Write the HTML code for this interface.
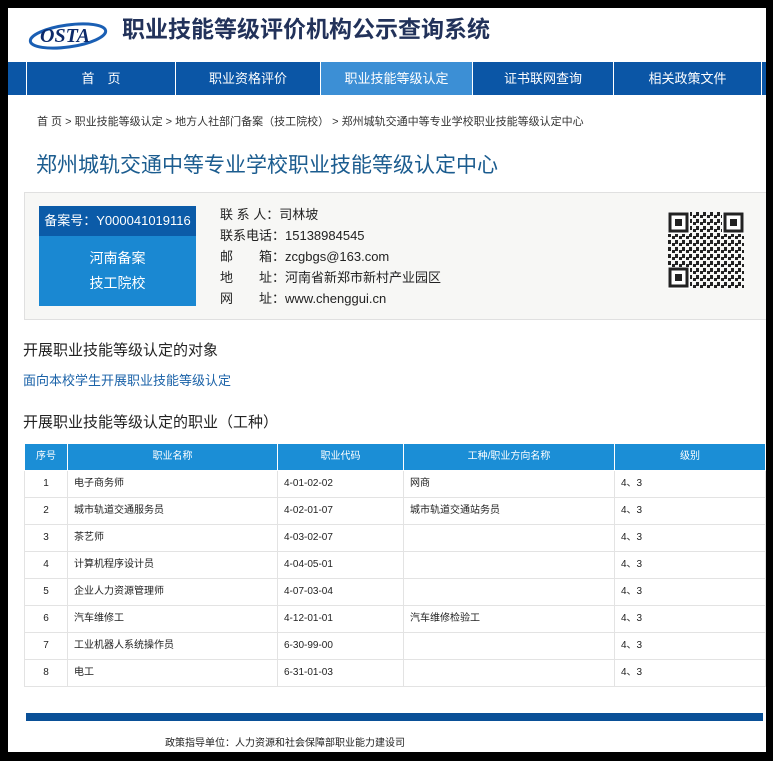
<!DOCTYPE html>
<html><head><meta charset="utf-8"><style>
*{margin:0;padding:0;box-sizing:border-box}
body{width:773px;height:761px;background:#000;font-family:"Liberation Sans","Noto Sans CJK SC",sans-serif;position:relative;overflow:hidden}
.page{position:absolute;left:8px;top:8px;width:758px;height:744px;background:#fff;overflow:hidden}
.a{position:absolute;white-space:nowrap}
.nav{position:absolute;left:0;top:54px;width:758px;height:33px;background:#0b56a6}
.nav div{position:absolute;top:0;height:33px;line-height:33px;color:#fff;font-size:13px;text-align:center;border-left:1px solid #fff}
table{position:absolute;left:16px;top:435px;width:742px;border-collapse:collapse;font-size:10px;color:#222}
td,th{border:1px solid #e3e3e3;height:27px;padding:0 0 0 6px;text-align:left;vertical-align:middle;line-height:12px}
th{background:#1b8ed6;color:#fff;font-weight:normal;text-align:center;padding:0;border-color:#fff}
td:first-child{text-align:center;padding:0}
</style></head><body><div class="page">
<svg class="a" style="left:20px;top:6px" width="96" height="38" viewBox="0 0 96 38"><ellipse cx="40" cy="22" rx="38" ry="11" fill="none" stroke="#1a5fb4" stroke-width="3" transform="rotate(-8 40 22)"/><text x="12" y="28" font-family="Liberation Serif" font-style="italic" font-weight="bold" font-size="20" fill="#0d2a6a">OSTA</text></svg>
<div class="a" style="left:114px;top:4px;font-size:23px;font-weight:bold;color:#22325a;line-height:34px">职业技能等级评价机构公示查询系统</div>
<div class="nav">
<div style="left:18px;width:149px">首　页</div>
<div style="left:167px;width:145px">职业资格评价</div>
<div style="left:312px;width:152px;background:#3c8fd5">职业技能等级认定</div>
<div style="left:464px;width:141px">证书联网查询</div>
<div style="left:605px;width:148px">相关政策文件</div>
<div style="left:753px;width:5px"></div>
</div>
<div class="a" style="left:29px;top:105px;font-size:11px;color:#333">首 页 &gt; 职业技能等级认定 &gt; 地方人社部门备案（技工院校） &gt; 郑州城轨交通中等专业学校职业技能等级认定中心</div>
<div class="a" style="left:28px;top:141px;font-size:21px;color:#1b5c8f">郑州城轨交通中等专业学校职业技能等级认定中心</div>
<div class="a" style="left:16px;top:184px;width:750px;height:128px;background:#f7f7f5;border:1px solid #e0e0e0"></div>
<div class="a" style="left:31px;top:198px;width:157px;height:30px;background:#0b5ba8;color:#fff;font-size:13px;line-height:30px;text-align:center">备案号：Y000041019116</div>
<div class="a" style="left:31px;top:228px;width:157px;height:70px;background:#1a88d2;color:#fff;font-size:14px;line-height:25px;text-align:center;padding-top:10px">河南备案<br>技工院校</div>
<div class="a" style="left:212px;top:196px;font-size:13px;color:#222;line-height:21px">联 系 人：司林坡<br>联系电话：15138984545<br>邮　　箱：zcgbgs@163.com<br>地　　址：河南省新郑市新村产业园区<br>网　　址：www.chenggui.cn</div>
<svg class="a" style="left:660px;top:204px" width="76" height="77" viewBox="0 0 76 77">
<defs><pattern id="q" width="7" height="7" patternUnits="userSpaceOnUse"><rect width="3" height="4" fill="#222"/><rect x="4" y="3" width="3" height="3" fill="#222"/></pattern></defs>
<rect width="76" height="77" fill="url(#q)"/>
<g fill="#fff"><rect width="22" height="22"/><rect x="54" width="22" height="22"/><rect y="55" width="22" height="22"/></g>
<g fill="none" stroke="#222" stroke-width="3"><rect x="2" y="2" width="17" height="17"/><rect x="57" y="2" width="17" height="17"/><rect x="2" y="57" width="17" height="17"/></g>
<g fill="#222"><rect x="7" y="7" width="7" height="7"/><rect x="62" y="7" width="7" height="7"/><rect x="7" y="62" width="7" height="7"/></g></svg>
<div class="a" style="left:15px;top:331px;font-size:15px;color:#222">开展职业技能等级认定的对象</div>
<div class="a" style="left:15px;top:362px;font-size:13px;color:#1a62a8">面向本校学生开展职业技能等级认定</div>
<div class="a" style="left:15px;top:403px;font-size:15px;color:#222">开展职业技能等级认定的职业（工种）</div>
<table>
<tr><th style="width:43px">序号</th><th style="width:210px">职业名称</th><th style="width:126px">职业代码</th><th style="width:211px">工种/职业方向名称</th><th>级别</th></tr>
<tr><td>1</td><td>电子商务师</td><td>4-01-02-02</td><td>网商</td><td>4、3</td></tr>
<tr><td>2</td><td>城市轨道交通服务员</td><td>4-02-01-07</td><td>城市轨道交通站务员</td><td>4、3</td></tr>
<tr><td>3</td><td>茶艺师</td><td>4-03-02-07</td><td></td><td>4、3</td></tr>
<tr><td>4</td><td>计算机程序设计员</td><td>4-04-05-01</td><td></td><td>4、3</td></tr>
<tr><td>5</td><td>企业人力资源管理师</td><td>4-07-03-04</td><td></td><td>4、3</td></tr>
<tr><td>6</td><td>汽车维修工</td><td>4-12-01-01</td><td>汽车维修检验工</td><td>4、3</td></tr>
<tr><td>7</td><td>工业机器人系统操作员</td><td>6-30-99-00</td><td></td><td>4、3</td></tr>
<tr><td>8</td><td>电工</td><td>6-31-01-03</td><td></td><td>4、3</td></tr>
</table>
<div class="a" style="left:18px;top:705px;width:737px;height:8px;background:#0a5097"></div>
<div class="a" style="left:157px;top:726px;font-size:10px;color:#222">政策指导单位：人力资源和社会保障部职业能力建设司</div>
</div></body></html>
